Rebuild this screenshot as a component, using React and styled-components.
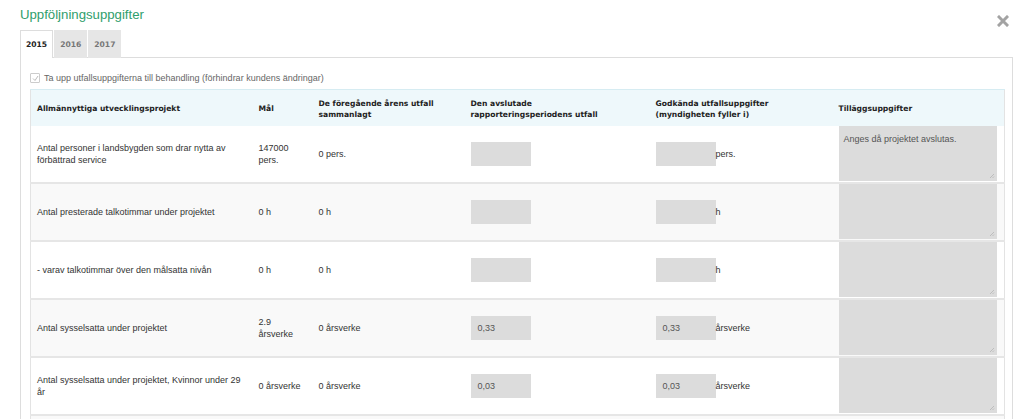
import React from 'react'
import styled, { createGlobalStyle } from 'styled-components'

const GlobalStyle = createGlobalStyle`
  html, body {
    margin: 0;
    padding: 0;
    background: #fff;
    font-family: 'Liberation Sans', Arial, sans-serif;
  }
`

const Dialog = styled.div`
  width: 1023px;
  height: 419px;
  overflow: hidden;
  padding: 6px 10px 0 20px;
  box-sizing: border-box;
  position: relative;
`

const Title = styled.h2`
  margin: 0;
  font-size: 13.2px;
  font-weight: 400;
  color: #2f9e6c;
  line-height: 17px;
`

const Close = styled.button`
  position: absolute;
  top: 15px;
  right: 14px;
  border: 0;
  background: none;
  padding: 0;
  width: 12px;
  height: 12px;
  cursor: pointer;
`

const Tabs = styled.div`
  display: flex;
  margin-top: 7px;
  gap: 1px;
`

const Tab = styled.div`
  font-family: 'DejaVu Sans', Verdana, sans-serif;
  font-size: 7.6px;
  font-weight: 700;
  padding: 0 5px;
  height: 28px;
  line-height: 28px;
  box-sizing: border-box;
  color: ${p => (p.$active ? '#222' : '#777')};
  background: ${p => (p.$active ? '#fff' : '#e6e6e6')};
  border: 1px solid ${p => (p.$active ? '#ddd' : '#e6e6e6')};
  border-bottom: 0;
  margin-bottom: -1px;
  position: relative;
  z-index: 1;
`

const Panel = styled.div`
  border: 1px solid #ddd;
  padding: 12px 9px 0 9px;
  width: 993px;
  box-sizing: border-box;
  min-height: 400px;
`

const CheckRow = styled.label`
  display: flex;
  align-items: center;
  gap: 4px;
  font-size: 9px;
  color: #666;
  height: 16px;
`

const Check = styled.span`
  width: 8px;
  height: 8px;
  border: 1px solid #ccc;
  border-radius: 1px;
  display: inline-flex;
  align-items: center;
  justify-content: center;
`

const Table = styled.table`
  margin-top: 3px;
  width: 975px;
  border-collapse: collapse;
  table-layout: fixed;
  border-left: 1px solid #e3e3e3;
  border-right: 1px solid #e3e3e3;
`

const Th = styled.th`
  background: #eef8fb;
  border-top: 1px solid #d6ecf2;
  font-family: 'DejaVu Sans', Verdana, sans-serif;
  font-size: 7.6px;
  font-weight: 700;
  color: #222;
  text-align: left;
  vertical-align: middle;
  padding: 1px 7px 0 6px;
  height: 35px;
  line-height: 11px;
`

const Tr = styled.tr`
  background: ${p => (p.$alt ? '#f9f9f9' : '#fff')};
  border-bottom: 2px solid #e6e6e6;
`

const Td = styled.td`
  font-size: 9px;
  color: #333;
  padding: 0 7px 0 6px;
  height: 56px;
  vertical-align: middle;
  line-height: 12px;
`

const InputWrap = styled.div`
  display: flex;
  align-items: center;
  font-size: 9px;
  color: #333;
`

const Field = styled.div`
  width: 60px;
  height: 24px;
  background: #dcdcdc;
  box-sizing: border-box;
  padding-left: 7px;
  display: flex;
  align-items: center;
  color: #555;
  font-size: 9px;
`

const Note = styled.div`
  width: 158px;
  height: 55px;
  background: #dcdcdc;
  box-sizing: border-box;
  padding: 7px 5px;
  font-size: 9px;
  color: #555;
  position: relative;
  margin-bottom: 1px;
`

const Grip = styled.svg`
  position: absolute;
  right: 2px;
  bottom: 2px;
`

const rows = [
  {
    name: 'Antal personer i landsbygden som drar nytta av förbättrad service',
    goal: '147000 pers.',
    prev: '0 pers.',
    cur: '',
    ok: '',
    unit: 'pers.',
    note: 'Anges då projektet avslutas.'
  },
  {
    name: 'Antal presterade talkotimmar under projektet',
    goal: '0 h',
    prev: '0 h',
    cur: '',
    ok: '',
    unit: 'h'
  },
  {
    name: '- varav talkotimmar över den målsatta nivån',
    goal: '0 h',
    prev: '0 h',
    cur: '',
    ok: '',
    unit: 'h'
  },
  {
    name: 'Antal sysselsatta under projektet',
    goal: '2.9 årsverke',
    prev: '0 årsverke',
    cur: '0,33',
    ok: '0,33',
    unit: 'årsverke'
  },
  {
    name: 'Antal sysselsatta under projektet, Kvinnor under 29 år',
    goal: '0 årsverke',
    prev: '0 årsverke',
    cur: '0,03',
    ok: '0,03',
    unit: 'årsverke'
  }
]

const App = () => (
  <Dialog>
    <GlobalStyle />
    <Title>Uppföljningsuppgifter</Title>
    <Close aria-label="Stäng">
      <svg width="12" height="12" viewBox="0 0 12 12">
        <path d="M2 2 L10 10 M10 2 L2 10" stroke="#a3a3a3" strokeWidth="3" strokeLinecap="square" />
      </svg>
    </Close>

    <Tabs>
      <Tab $active>2015</Tab>
      <Tab>2016</Tab>
      <Tab>2017</Tab>
    </Tabs>

    <Panel>
      <CheckRow>
        <Check>
          <svg width="7" height="7" viewBox="0 0 7 7">
            <path d="M1 3.5 L3 5.5 L6 1" stroke="#bbb" strokeWidth="1" fill="none" />
          </svg>
        </Check>
        Ta upp utfallsuppgifterna till behandling (förhindrar kundens ändringar)
      </CheckRow>

      <Table>
        <colgroup>
          <col style={{ width: 222 }} />
          <col style={{ width: 60 }} />
          <col style={{ width: 152 }} />
          <col style={{ width: 185 }} />
          <col style={{ width: 183 }} />
          <col />
        </colgroup>
        <thead>
          <tr>
            <Th>Allmännyttiga utvecklingsprojekt</Th>
            <Th>Mål</Th>
            <Th>De föregående årens utfall sammanlagt</Th>
            <Th>
              Den avslutade
              <br />
              rapporteringsperiodens utfall
            </Th>
            <Th>
              Godkända utfallsuppgifter
              <br />
              (myndigheten fyller i)
            </Th>
            <Th>Tilläggsuppgifter</Th>
          </tr>
        </thead>
        <tbody>
          {rows.map((r, i) => (
            <Tr key={i} $alt={i % 2 === 1}>
              <Td>{r.name}</Td>
              <Td>{r.goal}</Td>
              <Td>{r.prev}</Td>
              <Td>
                <Field>{r.cur}</Field>
              </Td>
              <Td>
                <InputWrap>
                  <Field>{r.ok}</Field>
                  {r.unit}
                </InputWrap>
              </Td>
              <Td>
                <Note>
                  {r.note}
                  <Grip width="6" height="6" viewBox="0 0 6 6">
                    <path d="M5 1 L1 5 M5 3.5 L3.5 5" stroke="#b5b5b5" strokeWidth="0.8" />
                  </Grip>
                </Note>
              </Td>
            </Tr>
          ))}
          <Tr $alt>
            <Td colSpan={6} />
          </Tr>
        </tbody>
      </Table>
    </Panel>
  </Dialog>
)

export default App
